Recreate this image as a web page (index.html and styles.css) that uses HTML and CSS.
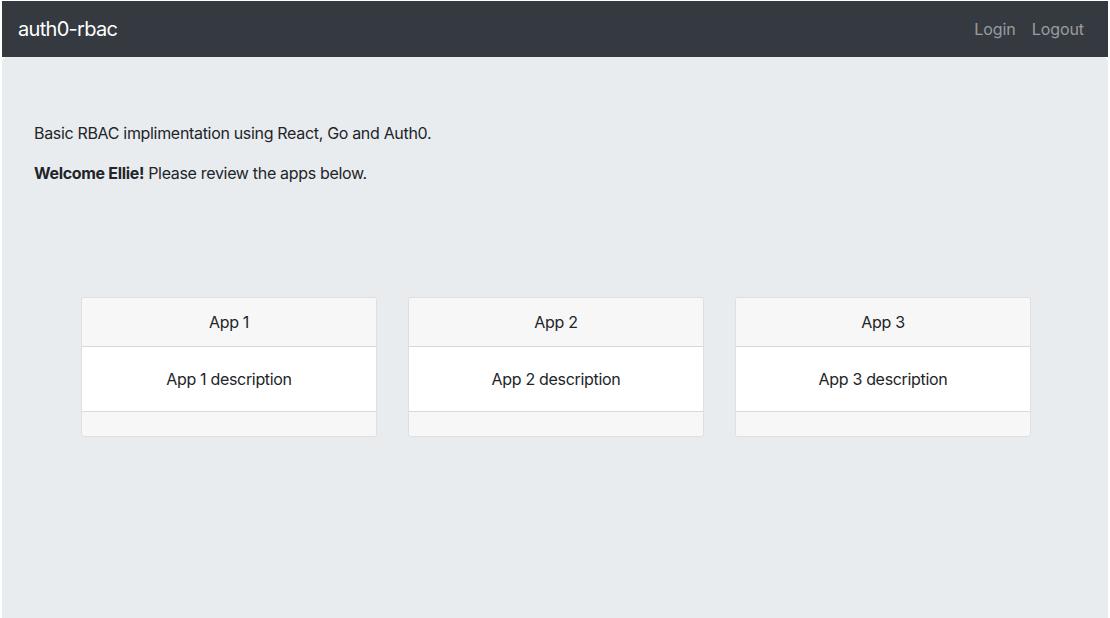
FILE: index.html
```html
<!DOCTYPE html>
<html lang="en">
<head>
<meta charset="utf-8">
<title>auth0-rbac</title>
<link rel="stylesheet" href="styles.css">
</head>
<body>
<div class="frame">
  <nav class="navbar">
    <a class="brand" href="#">auth0-rbac</a>
    <div class="nav-links">
      <a class="nav-link" href="#">Login</a>
      <a class="nav-link" href="#">Logout</a>
    </div>
  </nav>
  <main class="jumbotron">
    <p>Basic RBAC implimentation using React, Go and Auth0.</p>
    <p><strong>Welcome Ellie!</strong> Please review the apps below.</p>
    <div class="cards">
      <div class="card">
        <div class="card-header">App 1</div>
        <div class="card-body">App 1 description</div>
        <div class="card-footer"></div>
      </div>
      <div class="card">
        <div class="card-header">App 2</div>
        <div class="card-body">App 2 description</div>
        <div class="card-footer"></div>
      </div>
      <div class="card">
        <div class="card-header">App 3</div>
        <div class="card-body">App 3 description</div>
        <div class="card-footer"></div>
      </div>
    </div>
  </main>
</div>
</body>
</html>
```

FILE: styles.css
```css
* { box-sizing: border-box; }
html, body {
  margin: 0;
  height: 100%;
  background: #ffffff;
}
body {
  font-family: Inter, "Noto Sans", "Liberation Sans", sans-serif;
  font-size: 16px;
  line-height: 24px;
  letter-spacing: -0.02em;
  color: #212529;
}
.frame {
  height: 100%;
  padding: 1px 2px 0 2px;
  display: flex;
  flex-direction: column;
}
.navbar {
  background: #343a40;
  height: 56px;
  padding: 8px 16px;
  display: flex;
  align-items: center;
  justify-content: space-between;
  flex: none;
}
.brand {
  color: #fff;
  text-decoration: none;
  font-size: 20px;
  line-height: 30px;
  letter-spacing: -0.035em;
  padding: 5px 0;
}
.nav-links {
  display: flex;
}
.nav-link {
  color: rgba(255, 255, 255, 0.5);
  text-decoration: none;
  letter-spacing: -0.005em;
  padding: 8px;
}
.jumbotron {
  flex: 1;
  background: #e9ecef;
  border-radius: 5px 5px 0 0;
  padding: 64px 32px 0 32px;
  display: flex;
  flex-direction: column;
}
.jumbotron p {
  margin: 0 0 16px 0;
}
.jumbotron strong { font-weight: 700; }
.cards {
  margin-top: 96px;
  padding-left: 2px;
  display: flex;
  justify-content: center;
  gap: 31px;
}
.card {
  width: 296px;
  background: #fff;
  border: 1px solid rgba(0, 0, 0, 0.125);
  border-radius: 4px;
  text-align: center;
  overflow: hidden;
}
.card-header {
  background: #f7f7f7;
  padding: 12px 20px;
  border-bottom: 1px solid rgba(0, 0, 0, 0.125);
}
.card-body {
  padding: 20px;
}
.card-footer {
  background: #f7f7f7;
  border-top: 1px solid rgba(0, 0, 0, 0.125);
  height: 25px;
}
```
